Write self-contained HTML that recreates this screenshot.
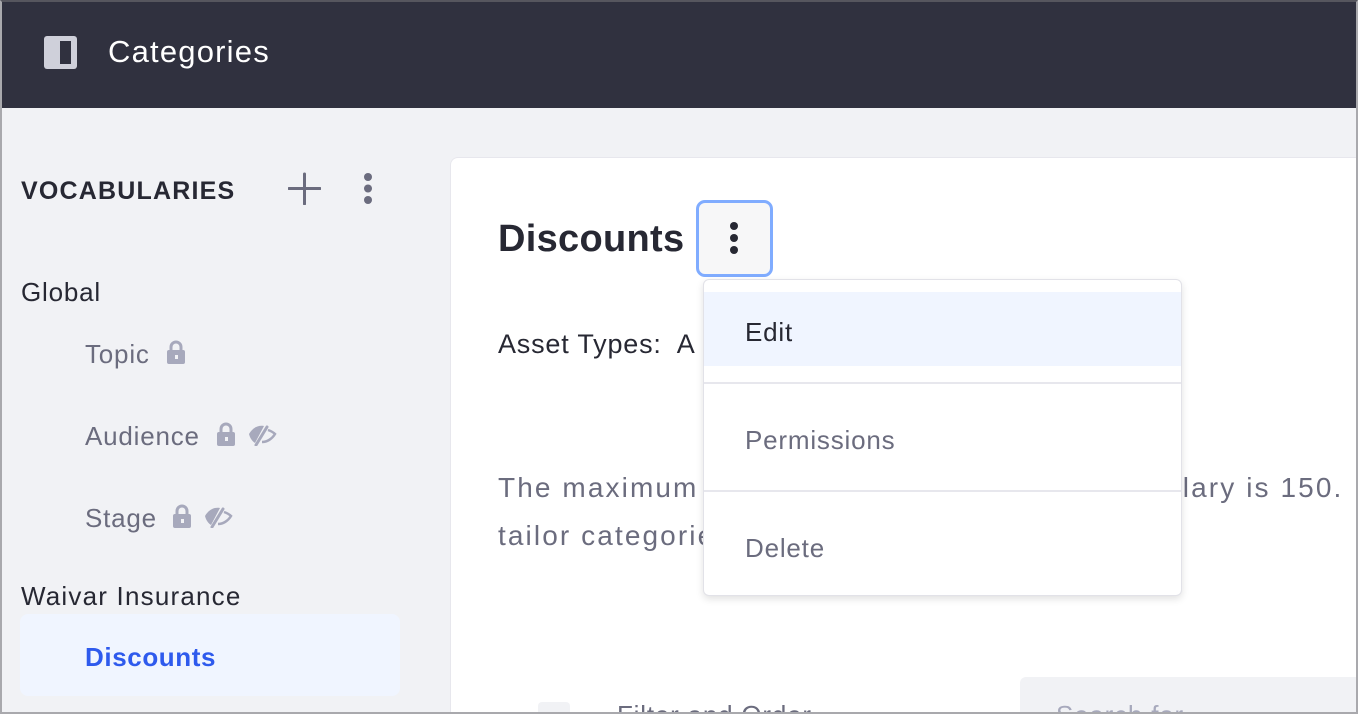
<!DOCTYPE html>
<html><head><style>
*{margin:0;padding:0;box-sizing:border-box}
html,body{width:1358px;height:714px;overflow:hidden}
body{background:#f1f2f5;font-family:"Liberation Sans",sans-serif}
#w{position:relative;width:1358px;height:714px;overflow:hidden}
.frame{position:absolute;left:0;top:0;width:1358px;height:714px;border:2px solid #a9a9ad;border-top-color:#56565e;z-index:50;pointer-events:none}
.hdr{position:absolute;left:0;top:0;width:1358px;height:108px;background:#30313f}
.hdr .t{position:absolute;left:108px;top:34px;color:#fff;font-size:31px;font-weight:500;letter-spacing:1.2px}
.a{position:absolute;white-space:nowrap}
.s{font-size:26px;letter-spacing:.8px}
.card{position:absolute;left:450px;top:157px;width:908px;height:557px;background:#fff;border:1px solid #e7e7ed;border-bottom:none;border-right:none;border-radius:8px 0 0 0}
.menu{position:absolute;left:703px;top:279px;width:479px;height:317px;background:#fff;border:1px solid #e2e2e8;border-radius:6px;box-shadow:0 3px 8px rgba(0,0,0,.12)}
</style></head><body><div id="w">
<div class="hdr">
<svg style="position:absolute;left:44px;top:36px" width="33" height="33" viewBox="0 0 33 33"><rect x="0" y="0" width="33" height="33" rx="3" fill="#cfd0da"/><rect x="16" y="5" width="11" height="23" fill="#30313f"/></svg>
<div class="t">Categories</div></div>

<div class="a" style="left:21px;top:177px;font-size:25px;font-weight:700;color:#272833;letter-spacing:1.2px">VOCABULARIES</div>
<svg class="a" style="left:288px;top:172px" width="33" height="33"><path d="M16.5 2v30M1 16.5h31" stroke="#6b6c7e" stroke-width="3" stroke-linecap="round"/></svg>
<svg class="a" style="left:360px;top:172px" width="16" height="34"><circle cx="8" cy="5" r="4" fill="#6b6c7e"/><circle cx="8" cy="16.5" r="4" fill="#6b6c7e"/><circle cx="8" cy="28" r="4" fill="#6b6c7e"/></svg>

<div class="a s" style="left:21px;top:277px;color:#272833">Global</div>
<div class="a s" style="left:85px;top:339px;color:#6b6c7e">Topic</div>
<div class="a s" style="left:85px;top:421px;color:#6b6c7e">Audience</div>
<div class="a s" style="left:85px;top:503px;color:#6b6c7e">Stage</div>
<svg class="a" style="left:166px;top:340px" width="20" height="25"><path d="M5 11V7a5 5 0 0 1 10 0v4" stroke="#a7a9bc" stroke-width="3" fill="none"/><rect x="1" y="10" width="18" height="14" rx="2" fill="#a7a9bc"/><rect x="9" y="15" width="3" height="4" fill="#f1f2f5"/></svg>
<svg class="a" style="left:216px;top:422px" width="20" height="25"><path d="M5 11V7a5 5 0 0 1 10 0v4" stroke="#a7a9bc" stroke-width="3" fill="none"/><rect x="1" y="10" width="18" height="14" rx="2" fill="#a7a9bc"/><rect x="9" y="15" width="3" height="4" fill="#f1f2f5"/></svg>
<svg class="a" style="left:172px;top:504px" width="20" height="25"><path d="M5 11V7a5 5 0 0 1 10 0v4" stroke="#a7a9bc" stroke-width="3" fill="none"/><rect x="1" y="10" width="18" height="14" rx="2" fill="#a7a9bc"/><rect x="9" y="15" width="3" height="4" fill="#f1f2f5"/></svg>
<svg class="a" style="left:247px;top:422px" width="30" height="24" viewBox="0 0 30 24"><path d="M2 12C6 5 12 3 17 4L8 21C5 19 3 16 2 12Z" fill="#a7a9bc"/><path d="M20 5L9 23" stroke="#a7a9bc" stroke-width="3" stroke-linecap="round"/><path d="M21 8C24 9 27 11 28 12C25 17 20 20 15 20" stroke="#a7a9bc" stroke-width="2.5" fill="none"/></svg>
<svg class="a" style="left:203px;top:504px" width="30" height="24" viewBox="0 0 30 24"><path d="M2 12C6 5 12 3 17 4L8 21C5 19 3 16 2 12Z" fill="#a7a9bc"/><path d="M20 5L9 23" stroke="#a7a9bc" stroke-width="3" stroke-linecap="round"/><path d="M21 8C24 9 27 11 28 12C25 17 20 20 15 20" stroke="#a7a9bc" stroke-width="2.5" fill="none"/></svg>

<div class="a s" style="left:21px;top:581px;color:#272833;letter-spacing:1.2px">Waivar Insurance</div>
<div class="a" style="left:20px;top:614px;width:380px;height:82px;background:#f0f5ff;border-radius:8px"></div>
<div class="a" style="left:85px;top:642px;font-size:26px;font-weight:700;color:#2e5aed;letter-spacing:.6px">Discounts</div>

<div class="card"></div>
<div class="a" style="left:498px;top:218px;font-size:38px;font-weight:700;color:#272833;letter-spacing:.3px">Discounts</div>
<div class="a" style="left:696px;top:200px;width:77px;height:77px;border:3px solid #80acff;border-radius:9px;background:#f7f7f8"></div>
<svg class="a" style="left:727px;top:221px" width="14" height="34"><circle cx="7" cy="5" r="4" fill="#272833"/><circle cx="7" cy="17" r="4" fill="#272833"/><circle cx="7" cy="29" r="4" fill="#272833"/></svg>
<div class="a" style="left:498px;top:329px;font-size:27px;color:#272833;letter-spacing:.8px">Asset Types:&nbsp; A</div>
<div class="a" style="left:498px;top:464px;font-size:28px;color:#6b6c7e;line-height:48px;letter-spacing:2.1px">The maximum number of categories per vocabulary is 150.<br>tailor categories</div>

<div class="a" style="left:538px;top:702px;width:32px;height:12px;background:#f1f2f5;border-radius:4px 4px 0 0"></div>
<div class="a" style="left:617px;top:700px;height:14px;overflow:hidden;font-size:26px;letter-spacing:.8px;color:#6b6c7e">Filter and Order</div>
<div class="a" style="left:1020px;top:677px;width:338px;height:37px;background:#f1f2f5;border-radius:6px 0 0 0"></div>
<div class="a" style="left:1056px;top:700px;height:14px;overflow:hidden;font-size:26px;letter-spacing:.8px;color:#a7a9bc">Search for</div>

<div class="menu">
<div class="a" style="left:0;top:12px;width:477px;height:74px;background:#f0f5ff"></div>
<div class="a s" style="left:41px;top:37px;color:#272833">Edit</div>
<div class="a" style="left:0;top:102px;width:477px;height:2px;background:#e7e7ed"></div>
<div class="a s" style="left:41px;top:145px;color:#6b6c7e">Permissions</div>
<div class="a" style="left:0;top:210px;width:477px;height:2px;background:#e7e7ed"></div>
<div class="a s" style="left:41px;top:253px;color:#6b6c7e">Delete</div>
</div>
<div class="frame"></div>
</div></body></html>
